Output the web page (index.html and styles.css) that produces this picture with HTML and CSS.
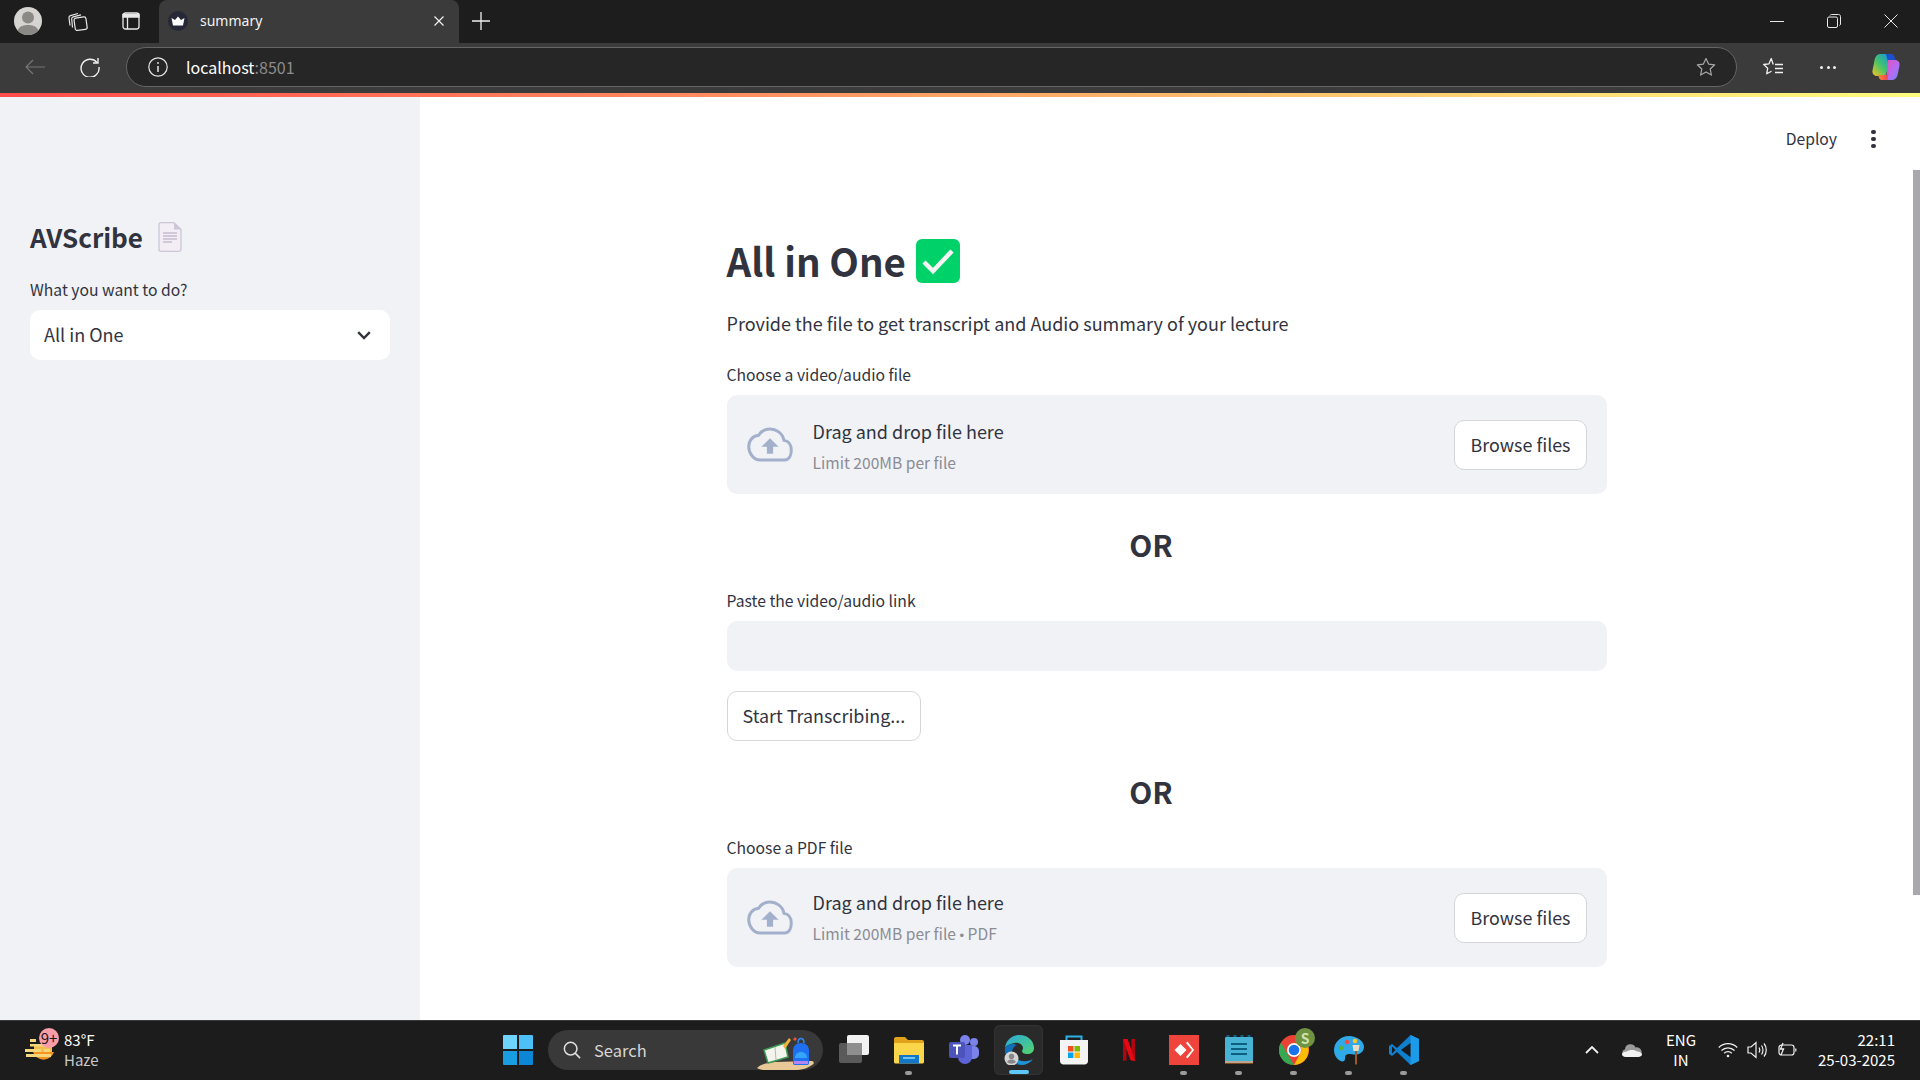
FILE: index.html
```html
<!DOCTYPE html>
<html lang="en">
<head>
<meta charset="utf-8">
<title>summary</title>
<link rel="stylesheet" href="styles.css">
</head>
<body>
<div class="tabstrip">
  <svg class="avatar" viewBox="0 0 28 28"><circle cx="14" cy="14" r="14" fill="#d6d4d0"/><circle cx="14" cy="10.5" r="6" fill="#8b8985"/><path d="M3.500 23.500C6 18.500 10 18 14 18s8 .5 10.500 5.500A14 14 0 0 1 14 28a14 14 0 0 1-10.500-4.500z" fill="#8b8985"/></svg>
  <svg class="collections" viewBox="0 0 22 22" fill="none" stroke="#e6e6e6" stroke-width="1.200"><path d="M3 15.500 2 8c-.2-1.300.4-2 1.500-2.300L11 3.500"/><path d="M5.500 17.500 4.700 9c-.1-1.200.4-1.900 1.500-2.200L14 4.800"/><rect x="7.500" y="7.500" width="12" height="12.500" rx="2" transform="rotate(-8 13 13)"/></svg>
  <svg class="vtabs" viewBox="0 0 18 18" fill="none" stroke="#e8e8e8" stroke-width="1.300"><rect x="1" y="1" width="16" height="16" rx="2.500"/><path d="M5.500 5v12"/><path d="M1 2.500h16V5H1z" fill="#e8e8e8"/></svg>
  <div class="tab">
    <span class="favicon"><svg viewBox="0 0 20 20"><circle cx="10" cy="10" r="10" fill="#262837"/><path d="M3.500 7 7 9l3-3.500L13 9l3.500-2-1.500 7.500H5z" fill="#fff"/></svg></span>
    <span class="tab-title">summary</span>
    <svg class="tab-close" viewBox="0 0 10 10" stroke="#f0f0f0" stroke-width="1.200"><path d="M.5.500l9 9M9.500.500l-9 9"/></svg>
  </div>
  <svg class="newtab" viewBox="0 0 18 18" stroke="#f0f0f0" stroke-width="1.300"><path d="M9 0v18M0 9h18"/></svg>
  <div class="winctl">
    <svg class="winbtn" viewBox="0 0 14 14" stroke="#e8e8e8" stroke-width="1"><path d="M0 7.500h14"/></svg>
    <svg class="winbtn" viewBox="0 0 14 14" fill="none" stroke="#e8e8e8" stroke-width="1"><rect x=".5" y="3" width="10" height="10.500" rx="1.500"/><path d="M3 1.500C3.300.8 3.800.5 4.500.5h7c1.200 0 2 .8 2 2v7.500c0 .7-.4 1.200-1 1.500"/></svg>
    <svg class="winbtn" viewBox="0 0 14 14" stroke="#e8e8e8" stroke-width="1"><path d="M.5.500l13 13M13.500.500l-13 13"/></svg>
  </div>
</div>
<div class="toolbar">
  <svg class="tb-back" viewBox="0 0 20 16" fill="none" stroke="#777" stroke-width="1.200"><path d="M20 8H1M8 1 1 8l7 7"/></svg>
  <svg class="tb-reload" viewBox="0 0 20 20" fill="none" stroke="#f0f0f0" stroke-width="1.400"><path d="M17 5.500A9 9 0 1 0 19 10"/><path d="M18 1v5h-5"/></svg>
  <div class="urlbar">
    <svg class="url-info" viewBox="0 0 20 20" fill="none" stroke="#e6e6e6" stroke-width="1.200"><circle cx="10" cy="10" r="9.200"/><path d="M10 9v6" stroke-width="1.500"/><circle cx="10" cy="6" r=".9" fill="#e6e6e6" stroke="none"/></svg>
    <span class="url-text">localhost<span class="url-port">:8501</span></span>
    <svg class="url-star" viewBox="0 0 20 20" fill="none" stroke="#a8a8a8" stroke-width="1.200" stroke-linejoin="round"><path d="M10 1.500l2.600 5.600 6.100.7-4.500 4.200 1.200 6.100-5.400-3-5.400 3 1.200-6.100L1.300 7.800l6.100-.7z"/></svg>
  </div>
  <svg class="tb-fav" viewBox="0 0 20 20" fill="none" stroke="#f0f0f0" stroke-width="1.300" stroke-linejoin="round"><path d="M10 7.500V6.800L8.200 1.500 6 6.800l-5.300.7 4 3.700-1 5.600 4.800-2.600"/><path d="M12 7.500h8M12 11.500h8M12 15.500h8"/></svg>
  <div class="tb-dots"><i></i><i></i><i></i></div>
  <svg class="tb-copilot" viewBox="0 0 28 26"><defs><linearGradient id="cpa" x1="0" y1="1" x2="1" y2="0"><stop offset="0" stop-color="#f6c61c"/><stop offset=".45" stop-color="#45c46a"/><stop offset="1" stop-color="#0e8ff0"/></linearGradient><linearGradient id="cpb" x1="0" y1="0" x2="1" y2="1"><stop offset="0" stop-color="#e551b8"/><stop offset=".55" stop-color="#b56cf2"/><stop offset="1" stop-color="#6f86f5"/></linearGradient><linearGradient id="cpc" x1="0" y1="0" x2="1" y2="0"><stop offset="0" stop-color="#f58a2c"/><stop offset="1" stop-color="#ef3c5e"/></linearGradient></defs><path d="M8 0h12l-6 20c-.6 1.500-1.500 2-3 2H5c-3 0-5-2.500-4.500-5.500l2-10C3 3 5 0 8 0z" fill="url(#cpa)"/><path d="M14 0h5c1.700 0 2.800.8 3.300 2.400L24 8h-8z" fill="#1a4fd0"/><path d="M16 6h7c3 0 5 2.300 4.500 5.500l-1.800 9c-.6 3-2.700 5.500-5.700 5.500h-6z" fill="url(#cpb)"/><path d="M6.500 21h9l1-3-1 8H10c-2.500 0-3.500-2.500-3.500-5z" fill="url(#cpc)"/></svg>
</div>
<div class="rainbow"></div>
<div class="app">
  <aside class="sidebar">
    <div class="side-title"><span>AVScribe</span>
      <svg class="doc" viewBox="0 0 24 30"><path d="M1 2.500C1 1.400 1.700.7 2.800.7H16L23 7.500v20c0 1-.7 1.800-1.800 1.800H2.800C1.700 29.300 1 28.500 1 27.500z" fill="#f3edf6" stroke="#cdc6d6" stroke-width="1.300"/><path d="M16 .7V7.500h7z" fill="#cdc6d6"/><path d="M5 11h14M5 14h14M5 17h14M5 20h9" stroke="#b0a4ba" stroke-width="1.200"/></svg>
    </div>
    <div class="field-label side-label">What you want to do?</div>
    <div class="select"><span>All in One</span>
      <svg class="chev" viewBox="0 0 14 9" fill="none" stroke="#31333f" stroke-width="2.400"><path d="M1.200 1.200 7 7l5.800-5.800"/></svg>
    </div>
  </aside>
  <main class="main">
    <header class="main-head">
      <span class="deploy">Deploy</span>
      <span class="kebab"><i></i><i></i><i></i></span>
    </header>
    <section class="content">
      <h1 class="title"><span>All in One</span>
        <svg class="check" viewBox="0 0 44 44"><rect width="44" height="44" rx="6" fill="#00d26a"/><path d="M8 23l9 9 19-20" fill="none" stroke="#f4f4f4" stroke-width="4.500"/></svg>
      </h1>
      <p class="lead">Provide the file to get transcript and Audio summary of your lecture</p>
      <div class="field-label l1">Choose a video/audio file</div>
      <div class="drop">
        <svg class="cloud" viewBox="0 0 40 30"><path d="M32.200 11.400C30.900 4.900 25.200 1.500 20 1.500c-4.300 0-8 2.400-9.900 5.500C4.800 7.500 1.500 11.700 1.500 17c0 5.800 4.500 11.500 10 11.500h21c4.500 0 6-4.500 6-8.500 0-4.400-2-8-6.300-8.600z" fill="none" stroke="#a3b0cb" stroke-width="2.600"/><path d="M20 9.500l7.500 7.500h-4.800v6h-5.400v-6h-4.800z" fill="#a3b0cb"/></svg>
        <div class="drop-text"><div class="drop-main">Drag and drop file here</div><div class="drop-sub">Limit 200MB per file</div></div>
        <button class="btn">Browse files</button>
      </div>
      <h2 class="or or1">OR</h2>
      <div class="field-label l2">Paste the video/audio link</div>
      <div class="input"></div>
      <button class="btn start">Start Transcribing...</button>
      <h2 class="or or2">OR</h2>
      <div class="field-label l3">Choose a PDF file</div>
      <div class="drop">
        <svg class="cloud" viewBox="0 0 40 30"><path d="M32.200 11.400C30.900 4.900 25.200 1.500 20 1.500c-4.300 0-8 2.400-9.900 5.500C4.800 7.500 1.500 11.700 1.500 17c0 5.800 4.500 11.500 10 11.500h21c4.500 0 6-4.500 6-8.500 0-4.400-2-8-6.300-8.600z" fill="none" stroke="#a3b0cb" stroke-width="2.600"/><path d="M20 9.500l7.500 7.500h-4.800v6h-5.400v-6h-4.800z" fill="#a3b0cb"/></svg>
        <div class="drop-text"><div class="drop-main">Drag and drop file here</div><div class="drop-sub">Limit 200MB per file <span class="bul">•</span> PDF</div></div>
        <button class="btn">Browse files</button>
      </div>
    </section>
    <div class="scrollbar"></div>
  </main>
</div>
<footer class="taskbar">
  <div class="weather">
    <svg class="w-icon" viewBox="0 0 30 32"><path d="M8 16a11 11 0 0 0 21 0z" fill="#f6941d"/><path d="M9 10h18v6H9z" fill="#f3c04f"/><path d="M5 3h6v3H5zM5 8h18v2.500H5zM0 13h16v3H0zM19 13h6v3h-6zM1 18h25v3H1z" fill="#f6d77c"/></svg>
    <span class="w-badge">9+</span>
    <div class="w-text"><div>83°F</div><div class="w-dim">Haze</div></div>
  </div>
  <div class="task-center">
    <span class="slot win"><svg viewBox="0 0 30 30"><path d="M0 1a1 1 0 0 1 1-1h13v14H0z" fill="#6fd4fb"/><path d="M16 0h13a1 1 0 0 1 1 1v13H16z" fill="#4dc0f5"/><path d="M0 16h14v14H1a1 1 0 0 1-1-1z" fill="#1a9de0"/><path d="M16 16h14v13a1 1 0 0 1-1 1H16z" fill="#0b87d5"/></svg></span>
    <div class="search">
      <svg class="s-icon" viewBox="0 0 20 20" fill="none" stroke="#e0e0e0" stroke-width="1.700"><circle cx="8.500" cy="8.500" r="7"/><path d="M13.500 13.500 19 19"/></svg>
      <span>Search</span>
      <svg class="s-art" viewBox="0 0 58 34"><path d="M0 32c4-4 10-5 18-6l36-1c3 0 4 2 1 4-4 3-10 5-18 5H8c-4 0-6-1-8-2z" fill="#e8c896"/><path d="M7 14 28 7l3 14-20 6z" fill="#f4f4ee" stroke="#3f9a54" stroke-width="1.500"/><path d="M18 11l1 13" stroke="#9bc9a4"/><path d="M26 10l6-8 2 2-6 9z" fill="#f4b23c"/><path d="M36 3.500 38 1l2 2-2 2z" fill="#e8503a"/><path d="M36 27V15c0-5 3-8 8-8s8 3 8 8v12c0 1.500-1 2-2 2H38c-1 0-2-.5-2-2z" fill="#1f6ff2"/><path d="M41 7c0-3 1-4.500 3-4.500S47 4 47 7" fill="none" stroke="#2d8cf5" stroke-width="1.500"/><path d="M38 22c0-4 3-6 6-6s6 2 6 6z" fill="#35a6f7"/><path d="M37 25h14v3H37z" fill="#b285f0"/></svg>
    </div>
    <span class="slot"><svg viewBox="0 0 30 30"><rect x="0" y="8" width="23" height="20" rx="2" fill="#5a5a5a"/><rect x="8" y="0" width="22" height="20" rx="2" fill="#f2f2f2"/><path d="M8 8h15v12H8z" fill="#8f8f8f"/></svg></span>
    <span class="slot dot"><svg viewBox="0 0 30 30"><path d="M0 4c0-1 .7-2 2-2h9l3 3h14c1 0 2 .8 2 2v4H0z" fill="#e0a21a"/><path d="M0 8h30v19c0 .8-.7 1.500-1.500 1.500h-27C.7 28.500 0 27.800 0 27z" fill="#fbd64b"/><path d="M5 20h20v8.500H5z" fill="#1276c9"/><path d="M9 22h12v2H9z" fill="#6cc4ef"/></svg></span>
    <span class="slot"><svg viewBox="0 0 30 30"><circle cx="25" cy="7" r="4" fill="#7b83eb"/><rect x="17" y="11" width="13" height="13" rx="5" fill="#7b83eb"/><circle cx="16" cy="5" r="5" fill="#7b83eb"/><path d="M9 10h14v12a7 7 0 0 1-14 0z" fill="#5d65d6"/><rect x="0" y="7" width="16" height="16" rx="2" fill="#4c53bb"/><path d="M4 10.500h8M8 10.500v9" stroke="#fff" stroke-width="2"/></svg></span>
    <span class="slot active"><svg viewBox="0 0 30 30"><defs><linearGradient id="edge" x1="0" y1="0" x2="1" y2="1"><stop offset="0" stop-color="#2aa8e0"/><stop offset="1" stop-color="#54d56a"/></linearGradient></defs><path d="M1 13C2 5 8 0 15.500 0 24 0 30 6 30 13c0 4-3 6-7 6-3 0-5-1-5-3 0-1 1-1.500 1-3 0-3-4-6-8.500-5C6 9 3 10 1 13z" fill="url(#edge)"/><path d="M1 13c3-4 8-5 12-3-3 1-5 4-5 8 0 5 4 10 9 12C8 30 0 24 1 13z" fill="#0f6fb8"/><path d="M17 30c-4-1-7-5-6-9 2 5 8 6 12 5 2 0 4-1 6-2-3 4-7 6-12 6z" fill="#1f93d6"/><circle cx="7.500" cy="23.500" r="7" fill="#d4d4d4"/><circle cx="7.500" cy="21.500" r="2.700" fill="#888"/><path d="M3 27c1-2 3-2.500 4.500-2.500S11 25 12 27a7 7 0 0 1-9 0z" fill="#888"/></svg></span>
    <span class="slot"><svg viewBox="0 0 30 30"><path d="M7.500 6V1.500h15V6" fill="none" stroke="#2bb0e8" stroke-width="2"/><path d="M1 5h28v21c0 2-1.500 3.500-3.500 3.500h-21C2.500 29.500 1 28 1 26z" fill="#f4f4f4"/><path d="M9 11h5.500v5.500H9z" fill="#f25022"/><path d="M15.500 11H21v5.500h-5.500z" fill="#7fba00"/><path d="M9 17.500h5.500V23H9z" fill="#00a4ef"/><path d="M15.500 17.500H21V23h-5.500z" fill="#ffb900"/></svg></span>
    <span class="slot"><svg viewBox="0 0 30 30"><path d="M9 4h4.500l4 11V4H21v22l-4.500-1-4-11v11.500L9 26z" fill="#b00610"/><path d="M9 4h4.500L21 26l-4.500-1z" fill="#e50914"/></svg></span>
    <span class="slot dot"><svg viewBox="0 0 30 30"><rect width="30" height="30" y="0" fill="#ef443b"/><path d="M5.500 15 11.500 9l6 6-6 6z" fill="#fff"/><path d="M17 8l1.500-1.500L25 15l-6.500 8.500L17 22l6-7z" fill="#fff"/></svg></span>
    <span class="slot dot"><svg viewBox="0 0 30 30"><rect x="1" y="2" width="28" height="26" rx="1" fill="#49b3d6"/><path d="M1 26h28v3H1z" fill="#7d4a22"/><path d="M1 27h28" stroke="#fff"/><path d="M4 2V0M11 2V0M18 2V0M25 2V0" stroke="#12607f" stroke-width="3"/><path d="M7 9h16M7 14h16M7 19h16" stroke="#0c5f80" stroke-width="2"/></svg></span>
    <span class="slot dot"><svg viewBox="0 0 30 30"><circle cx="15" cy="15" r="15" fill="#ea4335"/><path d="M2 7.500 8.500 19l6.500 11a15 15 0 0 1-13-22.500z" fill="#34a853"/><path d="M15 8h13a15 15 0 0 1-13 22l6-11a7 7 0 0 0-6-11z" fill="#fbbc04"/><circle cx="15" cy="15" r="7" fill="#fff"/><circle cx="15" cy="15" r="5.300" fill="#1a73e8"/></svg><span class="c-badge">S</span></span>
    <span class="slot dot"><svg viewBox="0 0 30 30"><path d="M15 1C6 1 0 8 0 15c0 8 7 13 10 11 2-1.500 0-4 2-6 3-2.500 8 1 13-1 3-1.200 5-4 5-7C30 6 23 1 15 1z" fill="#30a9e8"/><circle cx="7" cy="13" r="2.300" fill="#5cb030"/><circle cx="13" cy="7" r="2.300" fill="#f04b4b"/><circle cx="21" cy="6" r="2.300" fill="#fbc531"/><path d="M21 12h2v17.500h-2z" fill="#9c5a20"/><path d="M18.500 5h7l-1 6h-5z" transform="translate(0 5)" fill="#e8dcc8"/></svg></span>
    <span class="slot dot"><svg viewBox="0 0 30 30"><path d="M21.500 0 30 4v22l-8.500 4L8 17 3 21l-3-2v-8l3-2 5 4z" fill="#0f7fd0"/><path d="M21.500 0 30 4v22l-8.500 4z" fill="#1c9ce8"/><path d="M21.500 8 12 15l9.500 7z" fill="#1a1a1a"/><path d="M3 11.500v7l3.500-3.500z" fill="#1a1a1a"/></svg></span>
  </div>
  <div class="tray">
    <svg class="t-chev" viewBox="0 0 14 8" fill="none" stroke="#f0f0f0" stroke-width="1.800"><path d="M1 7l6-6 6 6"/></svg>
    <svg class="t-cloud" viewBox="0 0 20 14"><path d="M4 14a4 4 0 0 1-1-7.800A5.500 5.500 0 0 1 13.500 4.500 4.500 4.500 0 0 1 16 14z" fill="#9a9a9a"/><path d="M4 14C2 14 0 12.800 0 11.500 0 9.500 2 8.500 5 8.500c2-2 8-2 10 0 3 0 5 1.500 5 3s-2 2.500-4 2.500z" fill="#f2f2f2"/></svg>
    <div class="t-lang"><div>ENG</div><div>IN</div></div>
    <svg class="t-wifi" viewBox="0 0 20 16" fill="none" stroke="#f0f0f0" stroke-width="1.300"><path d="M.8 5.500a13 13 0 0 1 18.400 0M3.500 8.500a9.200 9.200 0 0 1 13 0M6.200 11.200a5.400 5.400 0 0 1 7.600 0"/><circle cx="10" cy="14" r="1.300" fill="#f0f0f0" stroke="none"/></svg>
    <svg class="t-vol" viewBox="0 0 20 18" fill="none" stroke="#f0f0f0" stroke-width="1.200"><path d="M1 6h3l5-4.500v15L4 12H1z"/><path d="M12 6.500c1 1.500 1 3.500 0 5M14.500 4.500c2 2.500 2 6.500 0 9M17 2.500c3 3.500 3 9.500 0 13"/></svg>
    <svg class="t-bat" viewBox="0 0 20 16" fill="none" stroke="#f0f0f0" stroke-width="1.200"><rect x="2" y="3" width="15" height="10" rx="2.500"/><path d="M18.800 6.500v3"/><path d="M6 1 3.500 7h3l-2.500 6" stroke-width="1.300"/></svg>
    <div class="t-clock"><div>22:11</div><div>25-03-2025</div></div>
  </div>
</footer>
</body>
</html>
```
FILE: styles.css
```css
* { box-sizing: border-box; }
html, body { margin: 0; height: 100%; }
body {
  width: 1920px; height: 1080px; overflow: hidden;
  display: flex; flex-direction: column;
  font-family: "Noto Sans CJK SC", "Noto Sans", sans-serif;
  color: #31333f;
  background: #fff;
}
svg { display: block; flex: none; }

/* browser chrome */
.tabstrip {
  height: 43px; padding-bottom: 2px; background: #1d1d1d; display: flex; align-items: center;
  font-family: "Noto Sans", sans-serif;
}
.avatar { width: 28px; height: 28px; margin-left: 14px; }
.collections { width: 22px; height: 22px; margin-left: 25px; }
.vtabs { width: 18px; height: 18px; margin-left: 33px; }
.tab {
  width: 300px; height: 43px; margin: 0 0 -2px 19px; padding: 0 0 2px 9px; background: #3b3b3b;
  border-radius: 8px 8px 0 0; display: flex; align-items: center;
}
.favicon { width: 20px; height: 20px; }
.tab-title { color: #f2f2f2; font-size: 14px; margin-left: 12px; flex: 1; }
.tab-close { width: 10px; height: 10px; margin-right: 15px; }
.newtab { width: 18px; height: 18px; margin-left: 13px; }
.winctl { margin-left: auto; display: flex; gap: 43px; margin-right: 22px; }
.winbtn { width: 14px; height: 14px; }

.toolbar { height: 50px; padding-bottom: 2px; background: #3b3b3b; display: flex; align-items: center; }
.tb-back { width: 20px; height: 16px; margin-left: 25px; }
.tb-reload { width: 20px; height: 20px; margin-left: 35px; }
.urlbar {
  width: 1611px; height: 40px; margin-left: 26px; border-radius: 20px;
  background: #262626; border: 1px solid #656565; display: flex; align-items: center; padding: 0 20px 0 21px;
}
.url-info { width: 20px; height: 20px; }
.url-text { color: #fff; font-size: 16px; margin-left: 18px; flex: 1; line-height: 20px; }
.url-port { color: #8c8c8c; }
.url-star { width: 20px; height: 20px; }
.tb-fav { width: 20px; height: 20px; margin-left: 26px; }
.tb-dots { display: flex; gap: 3.500px; margin-left: 37px; }
.tb-dots i { width: 3px; height: 3px; border-radius: 50%; background: #f0f0f0; }
.tb-copilot { width: 28px; height: 26px; margin-left: 36px; }

.rainbow { height: 4px; background: linear-gradient(90deg, #ff4b4b, #fffd80); }

/* app */
.app { flex: 1; display: flex; min-height: 0; }
.sidebar { width: 420px; background: #f0f2f6; padding: 124px 30px 0; }
.side-title { display: flex; align-items: center; gap: 15px; height: 32px; font-size: 26px; line-height: 32px; font-weight: 600; }
.doc { width: 24px; height: 30px; }
.field-label { font-size: 15.700px; line-height: 22px; }
.side-label { margin-top: 26px; }
.select {
  margin-top: 9px; height: 50px; padding: 0 19px 2px 14px; background: #fff; border-radius: 10px;
  display: flex; align-items: center; justify-content: space-between;
  font-size: 18px; line-height: 28px;
}
.chev { width: 14px; height: 9px; margin-top: 2px; }

.main { flex: 1; position: relative; padding-top: 30px; }
.main-head { display: flex; justify-content: flex-end; align-items: center; height: 24px; padding-right: 44px; gap: 34px; }
.deploy { font-size: 15.700px; line-height: 24px; }
.kebab { display: flex; flex-direction: column; gap: 2.500px; width: 5px; }
.kebab i { width: 4.500px; height: 4.500px; border-radius: 50%; background: #31333f; }
.content { width: 880px; margin-left: 306.500px; margin-top: 87px; }
.title { margin: 0; display: flex; align-items: center; gap: 10px; font-size: 38.500px; line-height: 44px; font-weight: 600; height: 44px; }
.check { width: 44px; height: 44px; margin-top: 1px; }
.lead { margin: 0; font-size: 18px; line-height: 28px; margin-top: 27px; }
.l1 { margin-top: 27px; }
.drop {
  margin-top: 9px; height: 99px; background: #f0f2f6; border-radius: 10px;
  display: flex; align-items: center; padding: 0 20px;
}
.cloud { width: 46px; height: 35px; }
.drop-text { flex: 1; margin-left: 20px; }
.drop-main { font-size: 18px; line-height: 28px; }
.drop-sub { font-size: 15.600px; line-height: 22px; margin-top: 6px; color: #8b8c94; }
.bul { font-family: "Liberation Sans", sans-serif; font-size: 13px; }
.btn {
  height: 50px; background: #fff; border: 1px solid #d5d6d9; border-radius: 10px; padding: 0 15px 2px;
  font: 17.900px/28px "Noto Sans CJK SC", sans-serif; color: #31333f;
}
.or { margin: 0; font-size: 30px; line-height: 44px; font-weight: 600; text-align: center; padding-right: 31px; }
.or1 { margin-top: 28px; }
.l2 { margin-top: 24px; }
.input { margin-top: 9px; height: 50px; background: #f0f2f6; border-radius: 10px; }
.start { display: block; margin-top: 20px; }
.or2 { margin-top: 28px; }
.l3 { margin-top: 24px; }
.scrollbar { position: absolute; right: 0; top: 73px; width: 7px; height: 725px; background: #a9a9ad; }

/* taskbar */
.taskbar {
  height: 60px; padding-bottom: 2px; background: #1c1c1c; border-top: 1px solid #3a3a3a; display: flex; align-items: center; color: #fff;
  font-family: "Noto Sans CJK SC", sans-serif;
}
.weather { width: 490px; display: flex; align-items: center; padding-left: 25px; position: relative; flex: none; }
.w-icon { width: 30px; height: 32px; margin-top: 4px; }
.w-badge {
  position: absolute; left: 39px; top: -2px; width: 20px; height: 20px; border-radius: 50%;
  background: #fb9ca9; color: #1a1a1a; font-size: 15px; line-height: 20px; text-align: center;
}
.w-text { margin-left: 9px; font-size: 15px; line-height: 20px; }
.w-dim { color: #c8c8c8; }
.task-center { display: flex; align-items: center; }
.slot { width: 55px; height: 50px; display: flex; align-items: center; justify-content: center; position: relative; border-radius: 6px; }
.slot svg { width: 30px; height: 30px; }
.win { margin-right: 3px; }
.dot::after { content: ""; position: absolute; left: 24px; bottom: 0; width: 7px; height: 3.500px; border-radius: 2px; background: #9b9b9b; }
.active { background: #2a2a2a; box-shadow: inset 0 0 0 1px #333; width: 49px; margin: 0 3px; }
.active::after { content: ""; position: absolute; left: 15px; bottom: 1px; width: 20px; height: 3.500px; border-radius: 2px; background: #5cc8fa; }
.c-badge {
  position: absolute; left: 29px; top: 3px; width: 20px; height: 20px; border-radius: 50%; background: #6f9342;
  color: #cfe3b0; font-size: 14px; line-height: 20px; text-align: center; font-weight: 600;
}
.search {
  width: 275px; height: 40px; border-radius: 20px; background: #393939; margin-right: 3px;
  display: flex; align-items: center; padding-left: 15px; color: #d6d6d6; font-size: 16.500px; line-height: 24px; position: relative;
}
.s-icon { width: 18px; height: 18px; margin-right: 13px; }
.s-art { position: absolute; right: 8px; bottom: 0; width: 58px; height: 34px; }
.tray { margin-left: auto; display: flex; align-items: center; padding-right: 25px; font-size: 15px; line-height: 20px; }
.t-chev { width: 14px; height: 8px; }
.t-cloud { width: 20px; height: 14px; margin-left: 23px; }
.t-lang { margin-left: 24px; width: 30px; text-align: center; }
.t-wifi { width: 20px; height: 16px; margin-left: 22px; }
.t-vol { width: 20px; height: 18px; margin-left: 9px; }
.t-bat { width: 20px; height: 16px; margin-left: 10px; }
.t-clock { margin-left: 21px; text-align: right; }
```
